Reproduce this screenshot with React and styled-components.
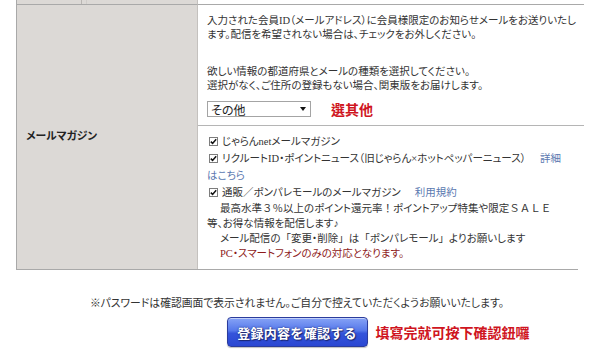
import React from "react";
import styled, { createGlobalStyle } from "styled-components";

const Global = createGlobalStyle`
  html, body { margin: 0; padding: 0; background: #fff; }
  body {
    width: 600px;
    height: 359px;
    overflow: hidden;
    font-family: "Liberation Serif", "Noto Sans CJK JP", serif;
    font-feature-settings: "palt";
    color: #333;
  }
`;

const Page = styled.div`
  padding-left: 16px;
  width: 562px;
`;

const Table = styled.div`
  display: grid;
  grid-template-columns: 181px 1fr;
  border-left: 1px solid #a9a9a9;
  border-right: 1px solid #a9a9a9;
  border-bottom: 1px solid #a9a9a9;
`;

const PrevLabel = styled.div`
  height: 4px;
  background: #dcd9d6;
  border-right: 1px solid #c4c1be;
  border-bottom: 1px solid #a9a9a9;
  padding-left: 64px;
`;

const Stub = styled.div`
  width: 4px;
  height: 4px;
  border-left: 1px solid #b9b6b3;
  border-right: 1px solid #d0cdca;
`;

const PrevCell = styled.div`
  height: 4px;
  background: #fff;
  border-bottom: 1px solid #a9a9a9;
`;

const Label = styled.div`
  grid-row: span 2;
  background: #dcd9d6;
  border-right: 1px solid #c4c1be;
  display: flex;
  align-items: center;
  padding: 0 0 5px 9px;
  font-family: "Noto Sans CJK JP", sans-serif;
  font-weight: 700;
  font-size: 10.8px;
  color: #222;
`;

const Cell = styled.div`
  background: #fff;
  padding: ${(p) => p.$pad};
  border-top: ${(p) => (p.$divided ? "1px solid #b5b5b5" : "none")};
  font-size: 10.5px;
`;

const Para = styled.p`
  margin: ${(p) => (p.$gap ? `${p.$gap}px 0 0` : "0")};
  height: 14px;
  line-height: 14px;
  white-space: nowrap;
`;

const SelectLine = styled.div`
  margin-top: 8px;
  height: 16px;
  display: flex;
  align-items: center;
`;

const SelectBox = styled.div`
  box-sizing: border-box;
  width: 104px;
  height: 16px;
  border: 1px solid #a4a4a4;
  background: #fff;
  display: flex;
  align-items: center;
  justify-content: space-between;
  padding: 0 4px 0 3px;
  font-family: "Noto Sans CJK JP", sans-serif;
  font-size: 12px;
  color: #222;
`;

const Note = styled.span`
  margin-left: ${(p) => p.$gap}px;
  color: #cf1521;
  font-family: "Noto Sans CJK TC", sans-serif;
  font-weight: 700;
  font-size: ${(p) => p.$size}px;
  white-space: nowrap;
`;

const ItemLine = styled.div`
  height: 17px;
  line-height: 17px;
  white-space: nowrap;
`;

const Check = styled.span`
  display: inline-block;
  box-sizing: border-box;
  width: 9px;
  height: 9px;
  border: 1px solid #7d7d7d;
  background: #fff;
  margin: 0 4px 0 2px;
  vertical-align: -1px;
  position: relative;
  svg { position: absolute; left: 0; top: 0; }
`;

const Link = styled.span`
  color: #5a78b0;
  margin-left: ${(p) => p.$gap || 0}px;
`;

const Wide = styled.span`
  font-feature-settings: normal;
`;

const DescLine = styled.div`
  height: 15px;
  line-height: 15px;
  white-space: nowrap;
  padding-left: ${(p) => (p.$indent ? 13 : 0)}px;
  color: ${(p) => p.$color || "#333"};
`;

const FootNote = styled.div`
  margin-top: 24px;
  height: 16px;
  text-align: center;
  line-height: 16px;
  font-family: "Noto Sans CJK JP", sans-serif;
  font-size: 10.8px;
  color: #333;
  white-space: nowrap;
`;

const ButtonRow = styled.div`
  margin-top: 7px;
  display: grid;
  grid-template-columns: 1fr auto 1fr;
  align-items: center;
`;

const ConfirmButton = styled.button`
  grid-column: 2;
  box-sizing: border-box;
  width: 141px;
  height: 30px;
  border: 1px solid #2b3c9c;
  border-radius: 4px;
  background: linear-gradient(#86a3f6, #5577ea 45%, #3454db 55%, #2a47d2);
  box-shadow: inset 0 1px 0 rgba(255, 255, 255, 0.5), 0 1px 1px rgba(0, 0, 0, 0.25);
  color: #fff;
  font-family: "Noto Sans CJK JP", sans-serif;
  font-weight: 700;
  font-size: 13px;
  letter-spacing: 0.3px;
  text-shadow: 0 0 2px #1a2670, 1px 1px 1px #1a2670;
  padding: 0;
  cursor: pointer;
`;

const NoteCell = styled.div`
  grid-column: 3;
  justify-self: start;
`;

const Tick = () => (
  <svg width="7" height="7" viewBox="0 0 7 7">
    <path d="M0.8 3.6 L2.6 5.4 L6.2 1.2" fill="none" stroke="#111" strokeWidth="1.5" />
  </svg>
);

const Arrow = () => (
  <svg width="6" height="4" viewBox="0 0 6 4">
    <path d="M0 0 H6 L3 4 Z" fill="#111" />
  </svg>
);

export default function App() {
  return (
    <>
      <Global />
      <Page>
        <Table>
          <PrevLabel>
            <Stub />
          </PrevLabel>
          <PrevCell />
          <Label>メールマガジン</Label>
          <Cell $pad="9px 8px 8px 9px">
            <Para>入力された会員ID（メールアドレス）に会員様限定のお知らせメールをお送りいたし</Para>
            <Para>ます。配信を希望されない場合は、チェックをお外しください。</Para>
            <Para $gap={23}>欲しい情報の都道府県とメールの種類を選択してください。</Para>
            <Para>選択がなく、ご住所の登録もない場合、関東版をお届けします。</Para>
            <SelectLine>
              <SelectBox>
                <span>その他</span>
                <Arrow />
              </SelectBox>
              <Note $gap={20} $size={14}>選其他</Note>
            </SelectLine>
          </Cell>
          <Cell $pad="7px 4px 8px 9px" $divided>
            <ItemLine>
              <Check><Tick /></Check>じゃらんnetメールマガジン
            </ItemLine>
            <ItemLine>
              <Check><Tick /></Check>リクルートID・ポイントニュース（旧じゃらん×ホットペッパーニュース）
              <Link $gap={14}>詳細</Link>
            </ItemLine>
            <ItemLine>
              <Link>はこちら</Link>
            </ItemLine>
            <ItemLine>
              <Check><Tick /></Check>通販<Wide>／</Wide>ポンパレモールのメールマガジン
              <Link $gap={14}>利用規約</Link>
            </ItemLine>
            <DescLine $indent>
              最高水準<Wide>３％</Wide>以上のポイント還元率<Wide>！</Wide>ポイントアップ特集や限定<Wide>ＳＡＬＥ</Wide>
            </DescLine>
            <DescLine>等、お得な情報を配信します♪</DescLine>
            <DescLine $indent>
              メール配信の<Wide>「</Wide>変更・削除<Wide>」</Wide>は<Wide>「</Wide>ポンパレモール<Wide>」</Wide>よりお願いします
            </DescLine>
            <DescLine $indent $color="#8e1b1b">PC・スマートフォンのみの対応となります。</DescLine>
          </Cell>
        </Table>
        <FootNote>※パスワードは確認画面で表示されません。ご自分で控えていただくようお願いいたします。</FootNote>
        <ButtonRow>
          <ConfirmButton type="button">登録内容を確認する</ConfirmButton>
          <NoteCell>
            <Note $gap={8} $size={14}>填寫完就可按下確認鈕囉</Note>
          </NoteCell>
        </ButtonRow>
      </Page>
    </>
  );
}
